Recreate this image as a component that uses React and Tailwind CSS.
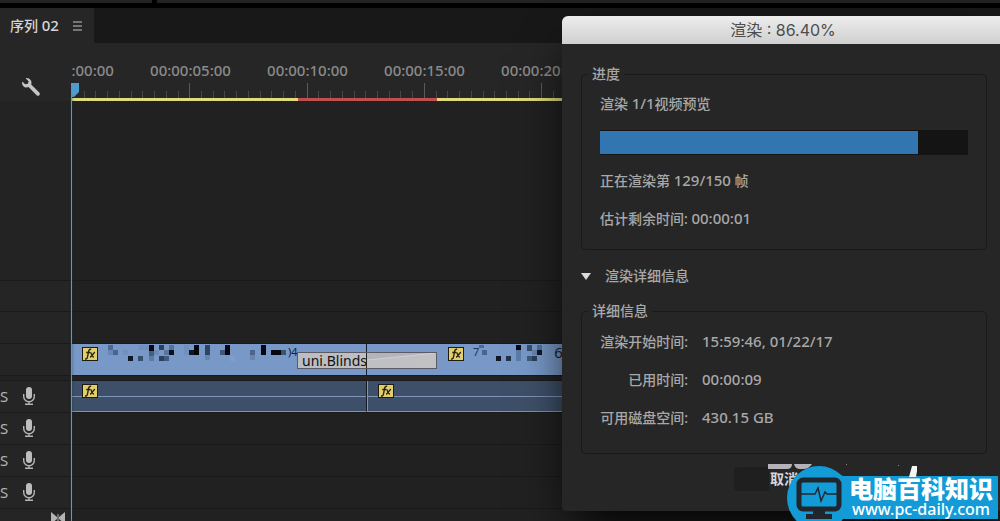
import React, { useState } from 'react';

const fontClass = "font-['Noto_Sans','Noto_Sans_CJK_SC',sans-serif]";

const timecodes = ['00:00:00:00', '00:00:05:00', '00:00:10:00', '00:00:15:00', '00:00:20:00'];

const details = [
  { label: '渲染开始时间:', value: '15:59:46, 01/22/17' },
  { label: '已用时间:', value: '00:00:09' },
  { label: '可用磁盘空间:', value: '430.15 GB' },
];

const audioTracks = ['A1', 'A2', 'A3', 'A4'];

// [x, y, width, height, fill]
const blocksLeft = [
  [0, 0, 5, 5, '#4f6a92'], [0, 5, 5, 5, '#6887b4'], [5, 5, 5, 5, '#4a648b'],
  [20, 11, 5, 5, '#101826'], [30, 11, 5, 5, '#37506f'], [15, 5, 5, 5, '#7190c0'],
  [41, 0, 5, 6, '#05080f'], [41, 6, 5, 5, '#45607f'], [41, 11, 5, 5, '#5c7ba6'], [31, 0, 10, 5, '#7190c0'],
  [51, 0, 5, 5, '#2c405c'], [56, 5, 5, 5, '#58779f'], [61, 0, 5, 5, '#54719a'], [61, 5, 5, 5, '#0b111c'],
  [51, 11, 5, 5, '#2c405c'], [56, 11, 5, 5, '#3f5b80'], [46, 5, 5, 5, '#6b8ab8'],
  [86, 0, 5, 10, '#04070d'], [81, 5, 5, 5, '#101826'], [76, 0, 5, 10, '#7190c0'],
  [97, 0, 5, 10, '#2f4463'], [97, 10, 5, 5, '#6685b1'],
  [117, 0, 5, 10, '#04070d'], [112, 5, 5, 5, '#3e577b'], [122, 11, 5, 5, '#7f9dcd'],
  [142, 5, 5, 5, '#4a648b'], [142, 10, 5, 5, '#6685b1'],
  [153, 0, 5, 10, '#04070d'], [163, 5, 10, 5, '#05080f'], [173, 5, 5, 5, '#3a5375'],
];

const blocksRight = [
  [0, 0, 5, 3, '#4f6a92'], [3, 5, 5, 5, '#4a648b'], [17, 11, 5, 5, '#101826'], [27, 11, 5, 5, '#22334e'],
  [37, 0, 5, 5, '#05080f'], [37, 5, 5, 11, '#5c7ba6'], [48, 0, 5, 6, '#37506f'], [53, 5, 5, 5, '#6685b1'],
  [58, 5, 5, 5, '#101826'], [58, 0, 5, 5, '#54719a'], [48, 11, 5, 5, '#3f5b80'], [53, 11, 5, 5, '#2c405c'],
];

const Mosaic = ({ blocks, width }) => (
  <svg width={width} height="16" viewBox={`0 0 ${width} 16`} aria-hidden="true">
    {blocks.map(([x, y, w, h, fill]) => (
      <rect key={`${x}-${y}`} x={x} y={y} width={w} height={h} fill={fill} />
    ))}
  </svg>
);

const WrenchIcon = () => (
  <svg width="20" height="20" viewBox="0 0 20 20" aria-hidden="true">
    <path
      d="M4.6 1.2 7.6 4.2 6.9 6.7 4.2 7.3 1.3 4.5C.6 7 1.6 9 3.3 9.9 4.8 10.7 6.4 10.5 7.5 10.1L15.6 18.2C16.4 19 17.6 18.9 18.3 18.2 19 17.5 19.1 16.4 18.3 15.6L10.2 7.5C10.7 6.1 10.6 4.4 9.6 3.1 8.4 1.4 6.5.6 4.6 1.2Z"
      fill="#c4c4c4"
    />
  </svg>
);

const MicIcon = () => (
  <svg width="14" height="20" viewBox="0 0 14 20" aria-hidden="true">
    <rect x="4" y="1" width="6" height="12" rx="3" fill="#bdbdbd" />
    <path d="M1.7 8v2.5a5.3 5.3 0 0 0 10.6 0V8M7 15.5v3M3 18.3h8" fill="none" stroke="#b4b4b4" strokeWidth="1.4" />
  </svg>
);

const FxBadge = () => (
  <svg width="16" height="14" viewBox="0 0 16 14" className="shrink-0" role="img" aria-label="fx">
    <rect x=".5" y=".5" width="15" height="13" fill="#e3cf6a" stroke="#1d1c12" />
    <path d="M3 12c2 .4 2.4-1.3 2.7-3l.8-4.2C6.8 3 7.6 2 9.2 2.4M4.3 5.5h3.8M8.3 5.5c1.6 0 1.6 4.6 3.6 4.7M13 5.3c-1.5.2-3 4.600-5 4.9" fill="none" stroke="#26220f" strokeWidth="1.4" />
  </svg>
);

const Ruler = () => {
  const ticks = Array.from({ length: 80 }, (_, i) => i + 1);
  return (
    <div className="flex h-[58px] min-w-0 flex-1 flex-col overflow-hidden pt-[17px]">
      <div className="-ml-[57px] flex text-[15px] leading-5 font-medium text-[#8a8a8a]">
        {timecodes.map((t) => (
          <span key={t} className="w-[117px] shrink-0 text-center">
            {t}
          </span>
        ))}
      </div>
      <svg className="mt-[3px] h-[15px] w-full" aria-hidden="true">
        {ticks.map((i) => (
          <rect key={i} x={Math.round(i * 11.73)} y={i % 10 === 0 ? 0 : 8} width="1" height="15" fill={i % 10 === 0 ? '#5a5a5a' : '#484848'} />
        ))}
      </svg>
      <div className="flex h-[3px] shrink-0">
        <div className="w-[226px] bg-[#dfdc7c]" />
        <div className="w-[139px] bg-[#bf4f4f]" />
        <div className="flex-1 bg-[#dfdc7c]" />
      </div>
    </div>
  );
};

const Track = ({ className = 'h-8', header, children }) => (
  <div className={`flex shrink-0 border-t border-[#1a1a1a] ${className}`}>
    <div className="flex w-[72px] shrink-0 items-center bg-[#252525]">{header}</div>
    <div className="flex min-w-0 flex-1 bg-[#212121]">{children}</div>
  </div>
);

const AudioHeader = ({ name }) => (
  <div className="flex items-center pb-0.5">
    <button type="button" aria-label={`${name} solo`} className="w-[22px] text-left text-[15px] leading-5 text-[#b4b4b4]">
      S
    </button>
    <button type="button" aria-label={`${name} record`}>
      <MicIcon />
    </button>
  </div>
);

const VideoTrack = () => (
  <Track>
    <div className="relative flex min-w-0 flex-1">
      <div className="flex w-[295px] shrink-0 items-start border-r border-[#16202f] bg-[#7899c8] pl-2.5">
        <div className="pt-[3px]">
          <FxBadge />
        </div>
        <div className="ml-[10px] pt-px">
          <Mosaic blocks={blocksLeft} width={180} />
        </div>
        <span className="text-[11px] leading-4 text-[#16202f]">)4</span>
      </div>
      <div className="flex min-w-0 flex-1 items-start bg-[#7899c8] pl-[81px]">
        <div className="pt-[3px]">
          <FxBadge />
        </div>
        <span className="ml-[9px] text-[11px] leading-4 text-[#22334e]">7</span>
        <div className="pt-px">
          <Mosaic blocks={blocksRight} width={75} />
        </div>
        <span className="text-[15px] leading-4 text-[#16202f]">6</span>
      </div>
      {/* transition sits across the cut */}
      <div className="absolute left-[225px] top-2 flex h-[17px] w-[140px] border border-[#5b5b66] bg-linear-to-r from-[#bcbcc4] to-[#c2c2c4]">
        <div className="w-[69px] overflow-hidden border-r border-[#222] pl-1 text-sm leading-4 whitespace-nowrap text-[#111]">uni.Blinds</div>
        <svg className="h-full flex-1" viewBox="0 0 70 15" preserveAspectRatio="none" aria-hidden="true">
          <path d="M0 7 70 0H0Z" fill="#b3b3bb" />
          <path d="M0 7 70 0" stroke="#cfcfd4" strokeWidth="1" />
        </svg>
      </div>
    </div>
  </Track>
);

const AudioClips = () => (
  <>
    <div className="relative w-[295px] shrink-0 border-r border-b border-r-[#151b24] border-b-[#7e95b5] bg-[#3e5069] pl-2.5 pt-[3px]">
      <div className="absolute inset-x-0 top-[15px] h-px bg-[#7e95b5]" />
      <div className="relative w-4">
        <FxBadge />
      </div>
    </div>
    <div className="relative min-w-0 flex-1 border-b border-l border-[#7e95b5] bg-[#3e5069] pl-[10px] pt-[3px]">
      <div className="absolute inset-x-0 top-[15px] h-px bg-[#7e95b5]" />
      <div className="relative w-4">
        <FxBadge />
      </div>
    </div>
  </>
);

const Timeline = () => (
  <section className="relative flex flex-1 flex-col bg-[#262626]">
    <div className="flex shrink-0">
      <div className="flex w-[72px] shrink-0 items-end pb-1 pl-[21px]">
        <button type="button" aria-label="时间轴显示设置">
          <WrenchIcon />
        </button>
      </div>
      <Ruler />
    </div>
    <div className="flex h-[179px] shrink-0">
      <div className="w-[72px] bg-[#232323]" />
      <div className="flex-1 bg-[#212121]" />
    </div>
    <Track className="h-[31px]" />
    <Track />
    <VideoTrack />
    <div className="h-[5px] shrink-0 border-t border-[#1a1a1a] bg-[#222224]" />
    {audioTracks.map((name, i) => (
      <Track key={name} header={<AudioHeader name={name} />}>
        {i === 0 && <AudioClips />}
      </Track>
    ))}
    <Track
      className="h-[13px] overflow-hidden"
      header={
        <svg className="ml-[51px] mt-[5px]" width="14" height="12" viewBox="0 0 14 12" aria-hidden="true">
          <path d="M0 0 6 5V7L0 12ZM14 0 8 5V7L14 12Z" fill="#b4b4b4" />
          <path d="M7 2v9" stroke="#b4b4b4" />
        </svg>
      }
    />
    {/* playhead */}
    <div className="absolute inset-y-0 left-[71px] top-10 flex flex-col">
      <svg width="8" height="14" viewBox="0 0 8 14" aria-hidden="true">
        <path d="M0 0H8V9L3 14H0Z" fill="#4f9bcb" />
      </svg>
      <div className="w-px flex-1 bg-[#5a9cc6] shadow-[0_0_3px_#17364a]" />
    </div>
  </section>
);

const Num = ({ children }) => <span className="text-[15px] leading-none">{children}</span>;

const fieldsetClass = 'rounded-sm border border-[#1a1a1a] px-[18px]';
const legendClass = '-ml-3 px-1 leading-5';

const RenderDialog = ({ progress }) => {
  const [open, setOpen] = useState(true);

  return (
    <div role="dialog" aria-labelledby="render-title" className="absolute left-[562px] right-0 top-4 overflow-hidden rounded-tl-md rounded-bl-sm bg-[#262626] shadow-2xl shadow-black">
      <h1 id="render-title" className="h-7 bg-linear-to-b from-[#ededed] to-[#d0d0d0] pl-1 text-center font-['Inter','Noto_Sans_CJK_SC',sans-serif] text-base leading-7 text-[#4d4d4d]">
        渲染 : {progress.toFixed(2)}%
      </h1>

      <div className="pb-5 pl-[19px] pr-[13px] pt-5 text-sm leading-5 font-medium text-[#a8a8a8]">
        <fieldset className={fieldsetClass}>
          <legend className={legendClass}>进度</legend>
          <p className="mt-[10px] h-5">
            渲染 <Num>1/1</Num>视频预览
          </p>
          <div role="progressbar" aria-label="渲染进度" aria-valuenow={progress} aria-valuemin={0} aria-valuemax={100} className="mt-4 h-[25px] border-y border-[#141414] bg-[#141414]">
            <div className="h-full bg-[#3176b0]" style={{ width: `${progress}%` }} />
          </div>
          <p className="mt-4 h-5">
            正在渲染第 <Num>129/150</Num> 帧
          </p>
          <p className="mt-[18px] mb-5 h-5">
            估计剩余时间: <Num>00:00:01</Num>
          </p>
        </fieldset>

        <button type="button" aria-expanded={open} onClick={() => setOpen(!open)} className="mt-4 flex h-5 items-center gap-[14px]">
          <svg width="10" height="7" viewBox="0 0 10 7" aria-hidden="true">
            <path d="M0 0H10L5 7Z" fill="#dadada" />
          </svg>
          渲染详细信息
        </button>

        {open && (
          <fieldset className={`mt-[15px] ${fieldsetClass}`}>
            <legend className={legendClass}>详细信息</legend>
            <dl className="mt-[11px] mb-[25px] grid grid-cols-[88px_1fr] gap-x-[14px] gap-y-[18px]">
              {details.map((d) => (
                <React.Fragment key={d.label}>
                  <dt className="h-5 text-right whitespace-nowrap">{d.label}</dt>
                  <dd className="h-5">
                    <Num>{d.value}</Num>
                  </dd>
                </React.Fragment>
              ))}
            </dl>
          </fieldset>
        )}

        <div className="mt-[13px] flex justify-center">
          <button type="button" className="h-6 w-[100px] rounded-sm bg-linear-to-r from-[#1f1f1f] from-35% to-[#262626] to-35% font-bold text-[#d8d8d8]">
            取消
          </button>
        </div>
      </div>
    </div>
  );
};

const SiteBadge = () => (
  <div className="absolute bottom-0 right-0 flex items-end pr-0.5">
    <svg className="absolute -top-0.5 left-[-20px]" width="150" height="14" viewBox="0 0 150 14" aria-hidden="true">
      <path d="M1 0H25Q25 5 20 5H1ZM27 0H45Q42 5 36 5H33Q28 5 27 0Z" fill="#b5b2b8" />
      <path d="M79 0h1v1h-1ZM131 1h1v1h-1Z" fill="#888" />
      <path d="M145 2H150V7L149 13H142Z" fill="#f4f4f4" />
    </svg>
    <svg className="relative -mr-[14px] h-[55px] w-[64px] shrink-0" viewBox="0 0 64 55" aria-hidden="true">
      <circle cx="32" cy="32" r="32" fill="#139bd7" />
      <rect x="12" y="14" width="40" height="29" rx="4" fill="none" stroke="#20262b" strokeWidth="5" />
      <path d="M14 28H28L31 22 34 35 38 26 40 28H50" fill="none" stroke="#20262b" strokeWidth="1.5" />
      <path d="M26 43H38V48H45V53H19V48H26Z" fill="#20262b" />
    </svg>
    <div className="mb-0.5 h-[43px] bg-[#139bd7] pl-3 pr-[5px] text-white">
      <div className="pt-px text-2xl leading-6 font-black">电脑百科知识</div>
      <a href="#" className="block text-center text-base leading-4 font-medium">
        www.pc-daily.com
      </a>
    </div>
  </div>
);

export default function App() {
  return (
    <main className={`relative flex min-h-screen w-full flex-col overflow-hidden bg-[#111] ${fontClass}`}>
      <div className="flex h-2 shrink-0 gap-[5px] border-b-[5px] border-black bg-black">
        <div className="w-[152px] bg-[#232323]" />
        <div className="flex-1 bg-[#232323]" />
      </div>

      <div className="flex h-[35px] shrink-0 bg-[#181818]">
        <div className="flex w-[94px] items-center gap-[14px] bg-[#262626] pl-[10px] text-[#d6d6d6]">
          <h2 className="text-sm leading-5 font-medium whitespace-nowrap">
            序列 <Num>02</Num>
          </h2>
          <button type="button" aria-label="菜单">
            <svg width="9" height="10" viewBox="0 0 9 10" aria-hidden="true">
              <path d="M0 1H9M0 5H9M0 9H9" stroke="#c4c4c4" strokeWidth="1.2" />
            </svg>
          </button>
        </div>
      </div>

      <Timeline />
      <RenderDialog progress={86.4} />
      <SiteBadge />
    </main>
  );
}
